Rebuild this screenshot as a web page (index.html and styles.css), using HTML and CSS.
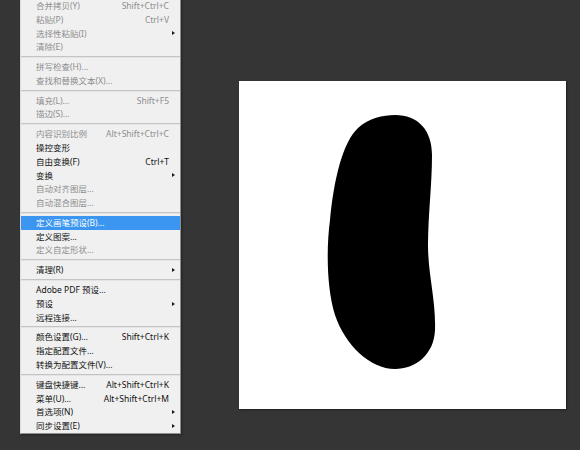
FILE: index.html
```html
<!DOCTYPE html>
<html>
<head>
<meta charset="utf-8">
<link rel="stylesheet" href="styles.css">
</head>
<body>
<div class="workspace">
  <div class="menu">
    <div class="item off"><span class="label">合并拷贝(Y)</span><span class="key">Shift+Ctrl+C</span><span class="sub"></span></div>
    <div class="item off"><span class="label">粘贴(P)</span><span class="key">Ctrl+V</span><span class="sub"></span></div>
    <div class="item off"><span class="label">选择性粘贴(I)</span><span class="key"></span><span class="sub"><i class="arrow"></i></span></div>
    <div class="item off"><span class="label">清除(E)</span><span class="key"></span><span class="sub"></span></div>
    <div class="sep"></div>
    <div class="item off"><span class="label">拼写检查(H)...</span><span class="key"></span><span class="sub"></span></div>
    <div class="item off"><span class="label">查找和替换文本(X)...</span><span class="key"></span><span class="sub"></span></div>
    <div class="sep"></div>
    <div class="item off"><span class="label">填充(L)...</span><span class="key">Shift+F5</span><span class="sub"></span></div>
    <div class="item off"><span class="label">描边(S)...</span><span class="key"></span><span class="sub"></span></div>
    <div class="sep"></div>
    <div class="item off"><span class="label">内容识别比例</span><span class="key">Alt+Shift+Ctrl+C</span><span class="sub"></span></div>
    <div class="item"><span class="label">操控变形</span><span class="key"></span><span class="sub"></span></div>
    <div class="item"><span class="label">自由变换(F)</span><span class="key">Ctrl+T</span><span class="sub"></span></div>
    <div class="item"><span class="label">变换</span><span class="key"></span><span class="sub"><i class="arrow"></i></span></div>
    <div class="item off"><span class="label">自动对齐图层...</span><span class="key"></span><span class="sub"></span></div>
    <div class="item off"><span class="label">自动混合图层...</span><span class="key"></span><span class="sub"></span></div>
    <div class="sep"></div>
    <div class="item active"><span class="label">定义画笔预设(B)...</span><span class="key"></span><span class="sub"></span></div>
    <div class="item"><span class="label">定义图案...</span><span class="key"></span><span class="sub"></span></div>
    <div class="item off"><span class="label">定义自定形状...</span><span class="key"></span><span class="sub"></span></div>
    <div class="sep"></div>
    <div class="item"><span class="label">清理(R)</span><span class="key"></span><span class="sub"><i class="arrow"></i></span></div>
    <div class="sep"></div>
    <div class="item"><span class="label">Adobe PDF 预设...</span><span class="key"></span><span class="sub"></span></div>
    <div class="item"><span class="label">预设</span><span class="key"></span><span class="sub"><i class="arrow"></i></span></div>
    <div class="item"><span class="label">远程连接...</span><span class="key"></span><span class="sub"></span></div>
    <div class="sep"></div>
    <div class="item"><span class="label">颜色设置(G)...</span><span class="key">Shift+Ctrl+K</span><span class="sub"></span></div>
    <div class="item"><span class="label">指定配置文件...</span><span class="key"></span><span class="sub"></span></div>
    <div class="item"><span class="label">转换为配置文件(V)...</span><span class="key"></span><span class="sub"></span></div>
    <div class="sep"></div>
    <div class="item"><span class="label">键盘快捷键...</span><span class="key">Alt+Shift+Ctrl+K</span><span class="sub"></span></div>
    <div class="item"><span class="label">菜单(U)...</span><span class="key">Alt+Shift+Ctrl+M</span><span class="sub"></span></div>
    <div class="item"><span class="label">首选项(N)</span><span class="key"></span><span class="sub"><i class="arrow"></i></span></div>
    <div class="item"><span class="label">同步设置(E)</span><span class="key"></span><span class="sub"><i class="arrow"></i></span></div>
  </div>
  <div class="canvas">
    <svg class="doc" viewBox="239 81 327 328" width="327" height="328">
      <path d="M 395 115 C 418 115, 432 130, 432 155 C 432 185, 428 215, 428 245 C 428 275, 436 300, 435 330 C 434 355, 415 369, 395 369 C 370 369, 345 345, 335 315 C 327 290, 326 250, 330 220 C 334 178, 343 142, 358 128 C 369 118, 383 115, 395 115 Z" fill="#000"/>
    </svg>
  </div>
</div>
</body>
</html>
```

FILE: styles.css
```css
html, body {
  margin: 0;
  padding: 0;
}
body {
  background: #353535;
  width: 580px;
  height: 450px;
  overflow: hidden;
  font-family: "Noto Sans", "Noto Sans CJK SC", sans-serif;
  font-size: 8.5px;
}
.workspace {
  display: flex;
  align-items: flex-start;
}
.menu {
  margin: -4px 0 0 20px;
  width: 159px;
  background: #f0f0f0;
  border: 1px solid #8e8e8e;
  border-left-color: #dcdcdc;
  padding: 2px 0 0 0;
  box-shadow: 1px 1px 2px rgba(0,0,0,0.35);
}
.item {
  display: grid;
  grid-template-columns: 1fr auto 11px;
  align-items: center;
  height: 13.75px;
  padding-left: 15px;
  color: #111;
  line-height: 13.75px;
  white-space: nowrap;
}
.item.off {
  color: #8d8d8d;
}
.item.active {
  background: #3a96f0;
  color: #fff;
}
.key {
  text-align: right;
}
.sub {
  display: flex;
  align-items: center;
  padding-left: 3px;
}
.arrow {
  display: block;
  width: 0;
  height: 0;
  border-top: 2.5px solid transparent;
  border-bottom: 2.5px solid transparent;
  border-left: 3px solid #1a1a1a;
}
.sep {
  height: 6.1px;
  display: flex;
  flex-direction: column;
  justify-content: center;
}
.sep::before {
  content: "";
  display: block;
  height: 1px;
  background: #c4c4c4;
  border-bottom: 1px solid #e4e4e4;
}
.canvas {
  margin: 81px 0 0 58px;
  width: 327px;
  height: 328px;
  background: #fff;
  box-shadow: 1px 1px 2px rgba(0,0,0,0.4);
}
.doc {
  display: block;
}
```
